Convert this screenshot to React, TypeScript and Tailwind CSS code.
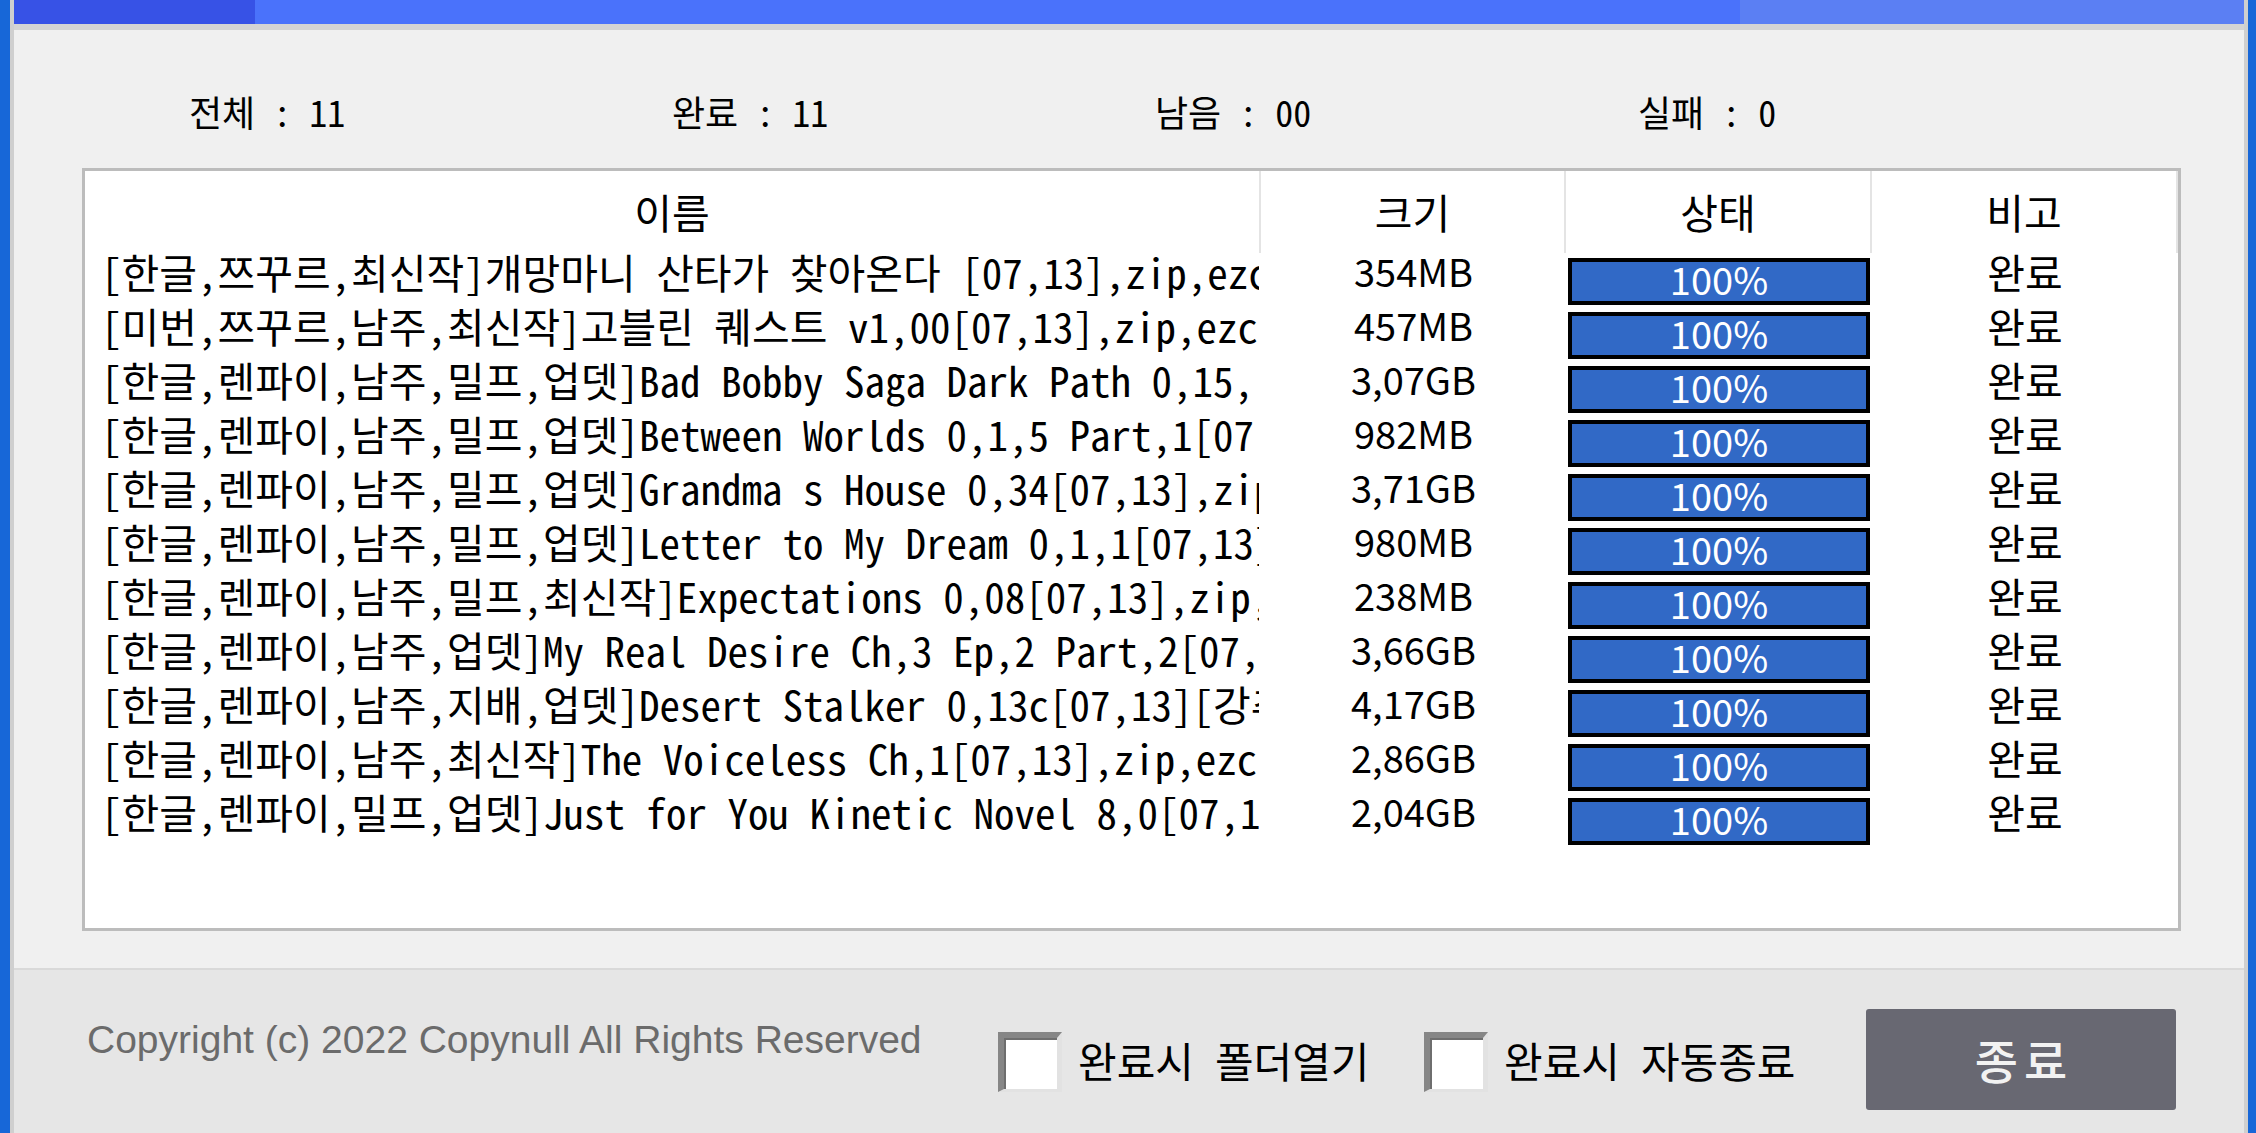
import React from 'react'

const rows = [
  { name: '[한글,쯔꾸르,최신작]개망마니 산타가 찾아온다 [07,13],zip,ezc', size: '354MB' },
  { name: '[미번,쯔꾸르,남주,최신작]고블린 퀘스트 v1,00[07,13],zip,ezc', size: '457MB' },
  { name: '[한글,렌파이,남주,밀프,업뎃]Bad Bobby Saga Dark Path 0,15,[07,13],zip,ezc', size: '3,07GB' },
  { name: '[한글,렌파이,남주,밀프,업뎃]Between Worlds 0,1,5 Part,1[07,13],zip,ezc', size: '982MB' },
  { name: '[한글,렌파이,남주,밀프,업뎃]Grandma s House 0,34[07,13],zip,ezc', size: '3,71GB' },
  { name: '[한글,렌파이,남주,밀프,업뎃]Letter to My Dream 0,1,1[07,13],zip,ezc', size: '980MB' },
  { name: '[한글,렌파이,남주,밀프,최신작]Expectations 0,08[07,13],zip,ezc', size: '238MB' },
  { name: '[한글,렌파이,남주,업뎃]My Real Desire Ch,3 Ep,2 Part,2[07,13],zip,ezc', size: '3,66GB' },
  { name: '[한글,렌파이,남주,지배,업뎃]Desert Stalker 0,13c[07,13][강추],zip,ezc', size: '4,17GB' },
  { name: '[한글,렌파이,남주,최신작]The Voiceless Ch,1[07,13],zip,ezc', size: '2,86GB' },
  { name: '[한글,렌파이,밀프,업뎃]Just for You Kinetic Novel 8,0[07,13],zip,ezc', size: '2,04GB' },
]

const stats = [
  { label: '전체', value: '11' },
  { label: '완료', value: '11' },
  { label: '남음', value: '00' },
  { label: '실패', value: '0' },
]

const kr = "font-['Noto_Sans_CJK_KR','Noto_Sans',sans-serif]"
// half-width latin / full-width hangul, like the old GulimChe bitmap
const mono = "font-['Noto_Sans_Mono_CJK_KR','Noto_Sans_CJK_KR','DejaVu_Sans_Mono',monospace]"

// Sunken Win32-style check box with a label next to it.
function CheckOption({ label, width }: { label: string; width: string }) {
  return (
    <div className={`mt-[62px] flex items-start ${width}`}>
      <div className="h-[60px] w-[64px] border-t-[6px] border-l-[6px] border-r-[5px] border-b-[3px] border-t-[#868686] border-l-[#868686] border-r-[#e2e2e2] border-b-[#e2e2e2] bg-white shadow-[inset_2px_2px_0_#6e6e6e]" />
      <span className={`ml-[16px] mt-[-2px] whitespace-nowrap text-[42px] leading-[60px] text-black ${mono}`}>
        {label}
      </span>
    </div>
  )
}

export default function App() {
  return (
    <div className={`flex h-[1133px] w-[2256px] bg-[#1767d8] pl-[10px] pr-[8px] ${kr}`}>
      <div className="flex flex-1 flex-col border-x-[4px] border-[#cfcfcf] bg-[#f0f0f0]">
        {/* progress strip along the top */}
        <div className="flex h-[24px]">
          <div className="w-[241px] bg-[#3752e6]" />
          <div className="flex-1 bg-[#4a72fb]" />
          <div className="w-[504px] bg-[#5b7ff3]" />
        </div>
        <div className="h-[6px] bg-[#d4d4d4]" />

        {/* counters */}
        <div className="flex h-[138px] pl-[175px] pt-[58px]">
          {stats.map((s) => (
            <div key={s.label} className={`w-[483px] whitespace-nowrap text-[36px] leading-[46px] text-black ${mono}`}>
              {s.label} : {s.value}
            </div>
          ))}
        </div>

        {/* list view */}
        <div className="ml-[68px] flex h-[763px] w-[2099px] flex-col border-[3px] border-[#bcbcbc] bg-white">
          <div className="flex h-[82px] text-[41px] text-black">
            {['이름', '크기', '상태', '비고'].map((h, i) => (
              <div
                key={h}
                className={`flex items-center justify-center border-r-2 border-[#e4e4e4] ${mono} ${
                  i === 0 ? 'w-[1176px]' : i === 1 ? 'w-[305px]' : 'w-[306px]'
                }`}
              >
                {h}
              </div>
            ))}
          </div>
          <div className="mt-px flex flex-col">
            {rows.map((r) => (
              <div key={r.name} className="flex h-[54px] items-start text-[38px] leading-[34px] text-black">
                <div className={`w-[1176px] overflow-x-clip whitespace-nowrap pl-[16px] pr-[2px] text-[41px] ${mono}`}>
                  <div className="overflow-x-clip">{r.name}</div>
                </div>
                <div className="w-[305px] text-center">{r.size}</div>
                <div className="flex h-full w-[306px] items-center pl-[2px]">
                  <div className="flex h-[47px] w-[302px] items-center justify-center border-[4px] border-black bg-[#3169c6] pb-[4px] text-[38px] leading-none text-white">
                    100%
                  </div>
                </div>
                <div className={`w-[306px] text-center text-[41px] ${mono}`}>완료</div>
              </div>
            ))}
          </div>
        </div>

        <div className="h-[37px]" />

        {/* footer */}
        <div className="flex flex-1 items-start border-t-2 border-[#d9d9d9] bg-[#e6e6e6] pl-[73px]">
          <div className="mt-[50px] w-[911px] font-['Liberation_Sans',Arial,sans-serif] text-[39px] leading-none text-[#6b6b6b]">
            Copyright (c) 2022 Copynull All Rights Reserved
          </div>
          <CheckOption label="완료시 폴더열기" width="w-[426px]" />
          <CheckOption label="완료시 자동종료" width="w-[442px]" />
          <button className="mt-[39px] flex h-[101px] w-[310px] items-center justify-center rounded-[3px] bg-[#686872] pl-[6px] text-[47px] font-medium tracking-[6px] text-[#f2f2f2]">
            종료
          </button>
        </div>
      </div>
    </div>
  )
}
